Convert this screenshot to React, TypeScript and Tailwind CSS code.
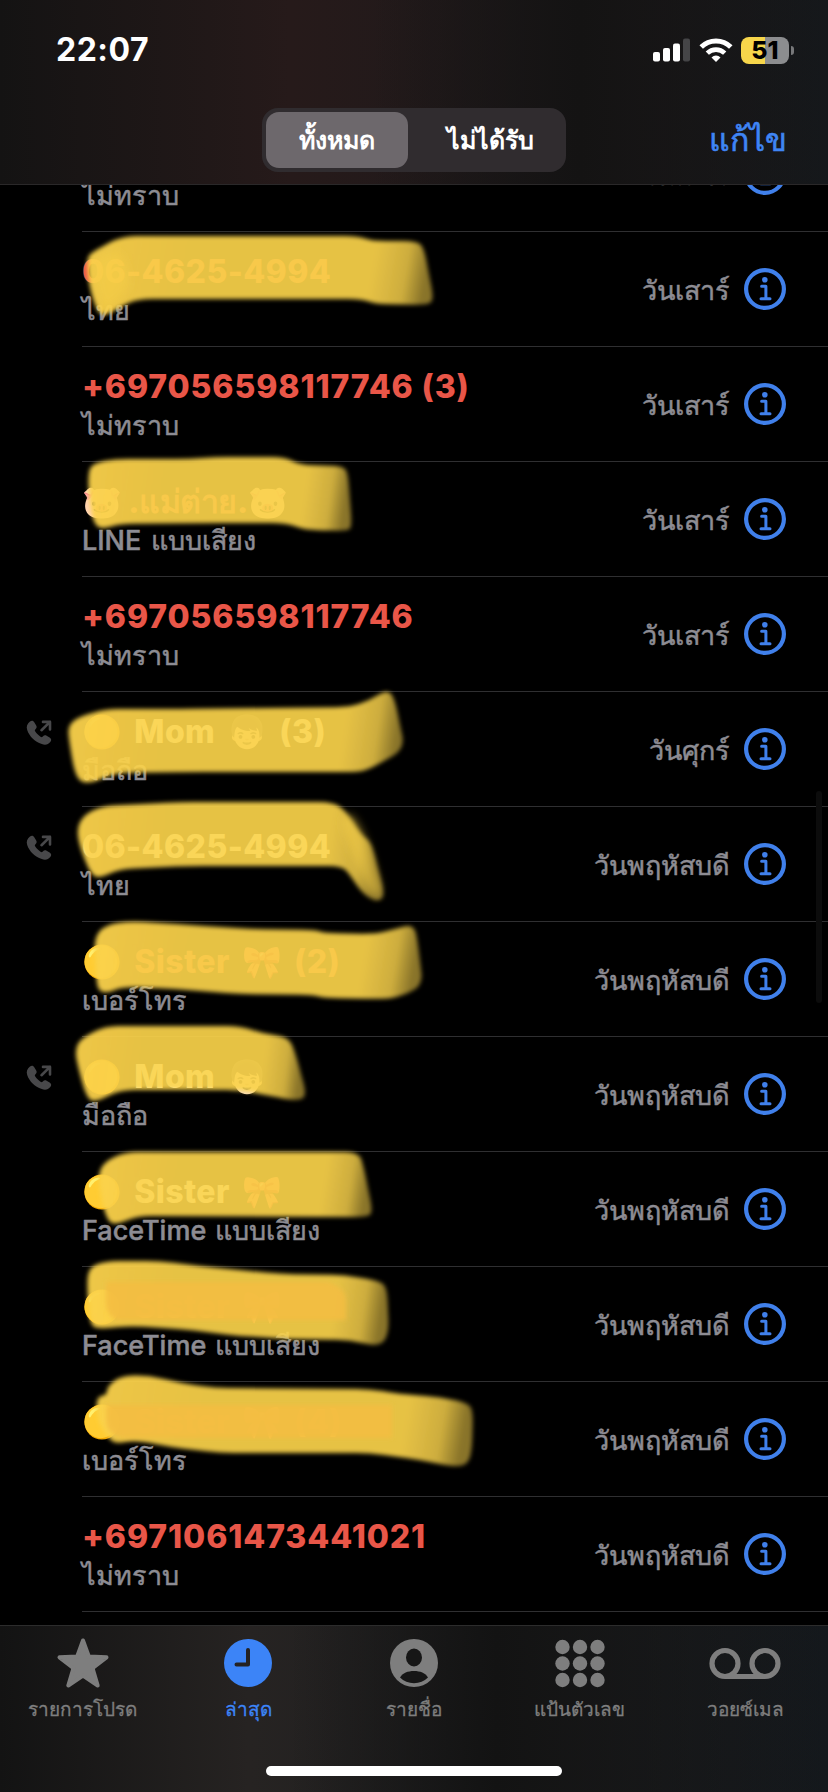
type Call = {
  name: string;
  label: string;
  day: string;
  missed?: boolean;
  outgoing?: boolean;
  spacing?: string;
};

const wide = 'tracking-[0.9px]';
const contact = 'tracking-[0.4px] [word-spacing:4.5px]';

const calls: Call[] = [
  { name: '+697056598117746', label: 'ไม่ทราบ', day: 'วันเสาร์', missed: true, spacing: wide },
  { name: '06-4625-4994', label: 'ไทย', day: 'วันเสาร์', missed: true },
  { name: '+697056598117746 (3)', label: 'ไม่ทราบ', day: 'วันเสาร์', missed: true, spacing: wide },
  { name: '🐷 .แม่ต่าย.🐷', label: 'LINE แบบเสียง', day: 'วันเสาร์', missed: true, spacing: 'tracking-[-0.4px]' },
  { name: '+697056598117746', label: 'ไม่ทราบ', day: 'วันเสาร์', missed: true, spacing: wide },
  { name: '🟡 Mom 👦🏻 (3)', label: 'มือถือ', day: 'วันศุกร์', outgoing: true, spacing: contact },
  { name: '06-4625-4994', label: 'ไทย', day: 'วันพฤหัสบดี', outgoing: true },
  { name: '🟡 Sister 🎀 (2)', label: 'เบอร์โทร', day: 'วันพฤหัสบดี', missed: true, spacing: contact },
  { name: '🟡 Mom 👦🏻', label: 'มือถือ', day: 'วันพฤหัสบดี', outgoing: true, spacing: contact },
  { name: '🟡 Sister 🎀', label: 'FaceTime แบบเสียง', day: 'วันพฤหัสบดี', spacing: contact },
  { name: '🟡 Sister 🎀', label: 'FaceTime แบบเสียง', day: 'วันพฤหัสบดี', missed: true, spacing: contact },
  { name: '🟡 Sister 🎀 (4)', label: 'เบอร์โทร', day: 'วันพฤหัสบดี', missed: true, spacing: contact },
  { name: '+6971061473441021', label: 'ไม่ทราบ', day: 'วันพฤหัสบดี', missed: true, spacing: wide },
];

// Highlighter outlines, in page coordinates
const strokes = [
  '88,257 92,252 122,236 358,236 372,241 417,241 424,248 434,300 427,305 375,304 362,299 138,299 122,306 105,316 97,312 89,285 87,264',
  '88,471 94,463 115,459 190,459 215,457 285,457 300,465 343,466 348,473 352,527 347,531 310,530 300,528 285,523 210,523 120,524 103,529 94,525 89,500',
  '68,727 76,718 105,709 180,709 350,707 370,700 388,689 395,700 405,749 370,769 358,772 190,772 115,773 92,783 80,782 74,770 69,740',
  '77,827 85,814 103,806 180,802 333,802 346,811 362,836 371,842 385,896 377,902 362,893 350,875 342,866 190,866 120,869 100,878 91,875 79,845',
  '94,938 105,925 130,921 190,925 250,929 315,930 325,933 375,934 395,929 414,924 418,943 423,987 395,998 380,999 325,998 312,995 240,994 160,988 122,987 108,993 98,991 96,975',
  '75,1051 80,1039 105,1026 240,1026 265,1034 289,1037 296,1055 307,1096 297,1101 265,1095 240,1090 120,1090 94,1103 86,1096 78,1067',
  '98,1175 104,1162 125,1152 359,1152 364,1168 373,1213 366,1217 138,1216 115,1225 107,1220 100,1195',
  '88,1268 105,1261 160,1261 200,1266 280,1274 345,1275 379,1281 387,1287 389,1333 380,1347 350,1340 290,1339 240,1336 180,1329 130,1326 97,1329 90,1324 87,1290',
  '107,1387 120,1376 148,1375 180,1383 215,1388 370,1389 400,1394 440,1397 468,1403 473,1411 472,1450 468,1464 455,1467 420,1460 370,1453 220,1453 170,1447 135,1440 115,1444 107,1436 97,1420 96,1397 107,1395',
];

const smears = ['358,872 340,818 352,812 368,842 382,892 374,899', '90,262 120,248 132,285 104,314'];

// Turns an outline into a closed path whose corners are rounded off
function rounded(outline: string, radius = 14) {
  const pts = outline.split(' ').map((p) => p.split(',').map(Number));
  const toward = (a: number[], b: number[]) => {
    const len = Math.hypot(b[0] - a[0], b[1] - a[1]);
    const t = Math.min(radius, len / 2) / len;
    return `${a[0] + (b[0] - a[0]) * t} ${a[1] + (b[1] - a[1]) * t}`;
  };
  return (
    pts
      .map((p, i) => {
        const prev = pts[(i + pts.length - 1) % pts.length];
        const next = pts[(i + 1) % pts.length];
        return `${i === 0 ? 'M' : 'L'}${toward(p, prev)}Q${p[0]} ${p[1]} ${toward(p, next)}`;
      })
      .join('') + 'Z'
  );
}

function InfoIcon() {
  return (
    <svg className="size-[42px] shrink-0" viewBox="0 0 42 42" fill="none" stroke="#4080eb" strokeLinecap="round" strokeLinejoin="round">
      <circle cx="21" cy="21" r="18.9" strokeWidth="4.2" />
      <path d="M17.6 18.2h4.3v12M17 30.7h9" strokeWidth="3" />
      <circle cx="20.8" cy="11.8" r="2.8" fill="#4080eb" stroke="none" />
    </svg>
  );
}

function OutgoingIcon() {
  return (
    <svg className="h-[26px] w-[26px]" viewBox="0 0 26 26">
      <path
        d="M4 1.6C5.7.2 7.3.6 8.4 2.4l1.8 3c.8 1.5.5 2.5-.7 3.8-.8.8-.8 1.3-.2 2.3 1.2 2 3.2 3.9 5.2 5.2 1 .6 1.5.6 2.3-.2 1.3-1.2 2.3-1.5 3.8-.7l3 1.8c1.8 1.1 2.1 2.8.7 4.5-2 2.5-5 3.2-8.5 2C8.5 21.8 3.5 16.5 1.2 10 0 6.5 1.3 3.7 4 1.6Z"
        fill="#48484a"
      />
      <path d="M15.5 10.2 24 1.9M17 1.9h7v7.5" fill="none" stroke="#48484a" strokeWidth="2.6" strokeLinecap="round" strokeLinejoin="round" />
    </svg>
  );
}

function CallRow({ call }: { call: Call }) {
  return (
    <li className="flex h-[115px] shrink-0">
      <div className="w-[82px] shrink-0 pt-[28px] pl-[26px]">{call.outgoing && <OutgoingIcon />}</div>
      <div className="flex flex-1 justify-between border-b border-[#2f2f31] pr-[42px]">
        <div className="pt-[20px] whitespace-nowrap">
          <p
            className={`text-[32px] leading-[40px] font-extrabold ${call.spacing ?? 'tracking-[0.4px]'} ${
              call.missed ? 'text-[#e95648]' : 'text-white'
            }`}
          >
            {call.name}
          </p>
          <p className="pt-px text-[27px] leading-[36px] font-medium text-[#8d8c93] [word-spacing:2px] [-webkit-text-stroke:0.5px_#8d8c93]">
            {call.label}
          </p>
        </div>
        <div className="flex items-center gap-[14px]">
          <span className="pt-[3px] text-[27px] leading-[36px] font-medium whitespace-nowrap text-[#8d8c93] [-webkit-text-stroke:0.5px_#8d8c93]">
            {call.day}
          </span>
          <InfoIcon />
        </div>
      </div>
    </li>
  );
}

function StatusBar() {
  return (
    <div className="flex h-[100px] items-center justify-between pr-[34px] pl-[56px]">
      <span className="text-[32px] leading-[40px] font-bold tracking-[0.5px]">22:07</span>
      <div className="flex items-center">
        <svg className="h-[24px] w-[38px]" viewBox="0 0 38 24" fill="#fff">
          <rect x="0" y="14" width="7" height="9.5" rx="2" />
          <rect x="10" y="10" width="7" height="13.5" rx="2" />
          <rect x="20" y="5.5" width="7" height="18" rx="2" />
          <rect x="30" y=".5" width="7" height="23" rx="2" fill="#454547" />
        </svg>
        <svg className="ml-[8px] h-[24px] w-[34px]" viewBox="0 0 34 24" fill="none" stroke="#fff" strokeWidth="5">
          <path d="M2.2 9.1a21 21 0 0 1 29.6 0" />
          <path d="M8.3 15.2a12.4 12.4 0 0 1 17.4 0" strokeWidth="4.6" />
          <path d="M17 24l-4.5-4.6a6.4 6.4 0 0 1 9 0Z" fill="#fff" stroke="none" />
        </svg>
        <div className="ml-[8px] flex h-[27px] w-[48px] items-center justify-center rounded-[8px] bg-linear-to-r from-[#f7d64b] from-50% to-[#8c8d8f] to-50% text-[25px] leading-[27px] font-extrabold text-black">
          51
        </div>
        <div className="ml-[2px] h-[9px] w-[3px] rounded-r-full bg-[#77787a]" />
      </div>
    </div>
  );
}

function Tab({ label, active, children }: { label: string; active?: boolean; children: React.ReactNode }) {
  return (
    <div className={`flex w-1/5 flex-col items-center pt-[10px] ${active ? 'text-[#3c84f7]' : 'text-[#7e7e7e]'}`}>
      <svg className="h-[54px] w-[76px]" viewBox="0 0 76 54" fill="currentColor">
        {children}
      </svg>
      <span className="mt-[7px] text-[19px] leading-[26px] font-medium whitespace-nowrap [-webkit-text-stroke:0.3px]">{label}</span>
    </div>
  );
}

export default function App() {
  return (
    <div className="relative flex h-[1792px] w-[828px] flex-col overflow-hidden bg-black font-['Inter',sans-serif] text-white">
      {/* Header */}
      <header className="h-[185px] shrink-0 border-b border-[#2a2829] bg-linear-to-r from-[#141313] via-[#261a1a] via-35% to-[#15181b]">
        <div className="h-full bg-linear-to-r from-transparent from-45% via-[#141313] via-70% to-transparent">
          <StatusBar />
          <div className="grid grid-cols-[1fr_304px_1fr] items-center pt-[8px]">
            <div />
            <div className="flex h-[64px] rounded-[16px] bg-[#302c2f] p-[4px] text-[25px] leading-[36px] font-semibold">
              <div className="flex w-[142px] items-center justify-center rounded-[13px] bg-[#6d686c]">ทั้งหมด</div>
              <div className="flex flex-1 items-center justify-center pl-[10px]">ไม่ได้รับ</div>
            </div>
            <button className="pr-[41px] text-right text-[32px] leading-[44px] font-medium text-[#3f85f5] [-webkit-text-stroke:0.6px]">
              แก้ไข
            </button>
          </div>
        </div>
      </header>

      {/* Recent calls */}
      <main className="h-[1440px] shrink-0 overflow-hidden">
        <ul className="-mt-[68px] flex flex-col">
          {calls.map((call, i) => (
            <CallRow key={i} call={call} />
          ))}
        </ul>
      </main>

      {/* Tab bar */}
      <nav className="h-[167px] shrink-0 border-t border-[#2c2c2c] bg-linear-to-r from-[#131313] via-[#262322] via-30% to-[#14181c]">
        <div className="flex h-full flex-col items-center justify-between bg-linear-to-r from-transparent from-35% via-[#131313] via-60% to-transparent pb-[16px]">
          <div className="flex w-full">
            <Tab label="รายการโปรด">
              <path
                d="M38 4.5 L43.8 20.5 L61.5 21.3 L47.5 32.2 L52.7 49.5 L38 39.6 L23.3 49.5 L28.5 32.2 L14.5 21.3 L32.2 20.5Z"
                stroke="currentColor"
                strokeWidth="4"
                strokeLinejoin="round"
              />
            </Tab>
            <Tab label="ล่าสุด" active>
              <circle cx="38" cy="27" r="24" />
              <path d="M38 14v14.5H26.5" fill="none" stroke="#242223" strokeWidth="4" strokeLinecap="round" strokeLinejoin="round" />
            </Tab>
            <Tab label="รายชื่อ">
              <circle cx="38" cy="27" r="24" />
              <ellipse cx="38" cy="21.5" rx="8" ry="9" fill="#161616" />
              <path d="M24 41.5c2.5-4.5 8-6.5 14-6.5s11.5 2 14 6.5c-3.8 3.6-8.6 5.7-14 5.7s-10.2-2.1-14-5.7Z" fill="#161616" />
            </Tab>
            <Tab label="แป้นตัวเลข">
              {[11, 27.5, 44].map((cy) =>
                [20.5, 38, 55.5].map((cx) => <circle key={`${cx}-${cy}`} cx={cx} cy={cy} r="7.2" />)
              )}
            </Tab>
            <Tab label="วอยซ์เมล">
              <g fill="none" stroke="currentColor" strokeWidth="5.2">
                <circle cx="18" cy="27.5" r="13" />
                <circle cx="58" cy="27.5" r="13" />
                <path d="M18 40.5h40" />
              </g>
            </Tab>
          </div>
          <div className="h-[10px] w-[296px] rounded-full bg-white" />
        </div>
      </nav>

      {/* Scroll indicator */}
      <div className="absolute top-[791px] left-[816px] h-[212px] w-[6px] rounded-full bg-[#0c0c0c]" />

      {/* Highlighter */}
      <svg className="pointer-events-none absolute top-0 left-0 h-[1792px] w-[828px]" viewBox="0 0 828 1792">
        <defs>
          <linearGradient id="ink" x1="0" x2="1" y1="0" y2="0.04">
            <stop offset="0" stopColor="#fad34b" stopOpacity=".95" />
            <stop offset=".12" stopColor="#fad049" stopOpacity=".94" />
            <stop offset=".3" stopColor="#fad34b" stopOpacity=".92" />
            <stop offset=".84" stopColor="#fad34b" stopOpacity=".92" />
            <stop offset=".94" stopColor="#fad34b" stopOpacity=".82" />
            <stop offset="1" stopColor="#fad34b" stopOpacity=".55" />
          </linearGradient>
          <filter id="soft">
            <feGaussianBlur stdDeviation="2" />
          </filter>
          <filter id="softer">
            <feGaussianBlur stdDeviation="4" />
          </filter>
        </defs>
        <g fill="url(#ink)" filter="url(#soft)">
          {strokes.map((outline) => (
            <path key={outline} d={rounded(outline)} />
          ))}
        </g>
        <g fill="#f8d045" fillOpacity=".5" filter="url(#softer)">
          {smears.map((outline) => (
            <path key={outline} d={rounded(outline)} />
          ))}
        </g>
        <g fill="#f4bd41" fillOpacity=".88" filter="url(#soft)">
          <path d="M106 1282h222q18 6 18 18v20H118q-12-4-12-18Z" />
          <path d="M106 1405h286v33H124q-18-4-18-18Z" />
        </g>
      </svg>
    </div>
  );
}
